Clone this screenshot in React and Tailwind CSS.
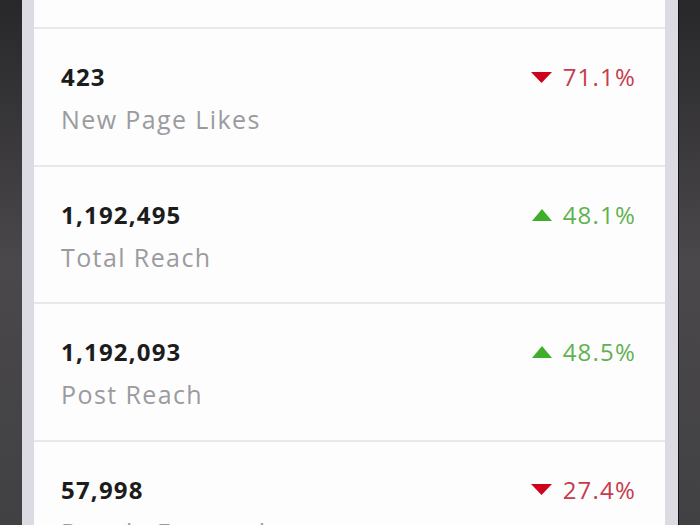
import React from 'react';

const stats = [
  { value: '423', label: 'New Page Likes', change: '71.1%', up: false },
  { value: '1,192,495', label: 'Total Reach', change: '48.1%', up: true },
  { value: '1,192,093', label: 'Post Reach', change: '48.5%', up: true },
  { value: '57,998', label: 'People Engaged', change: '27.4%', up: false },
];

function Trend({ up }) {
  if (up) {
    return (
      <svg width="20" height="12" viewBox="0 0 20 12" className="mr-[11px]">
        <polygon points="10,0 20,12 0,12" fill="#3fae2a" />
      </svg>
    );
  }
  return (
    <svg width="21" height="11" viewBox="0 0 21 11" className="mr-[11px]">
      <polygon points="0,0 21,0 10.5,11" fill="#d0021b" />
    </svg>
  );
}

function StatRow({ stat }) {
  return (
    <div className="h-[137.5px] border-b-2 border-[#e8e8ec] pl-[27px] pr-[29px] pt-[32px] flex justify-between items-start">
      <div>
        <div className="text-[24px] leading-[32px] font-bold text-[#1c1c1c] tracking-[1.2px]">{stat.value}</div>
        <div className="mt-[10px] text-[25px] leading-[32px] text-[#9b9b9e] tracking-[1.4px]">{stat.label}</div>
      </div>
      <div className="flex items-center h-[32px]">
        <Trend up={stat.up} />
        <span className={`text-[24px] leading-[32px] tracking-[1.2px] ${stat.up ? 'text-[#5fb250]' : 'text-[#c63c4c]'}`}>
          {stat.change}
        </span>
      </div>
    </div>
  );
}

export default function App() {
  return (
    <div className="w-[700px] h-[525px] overflow-hidden flex bg-gradient-to-b from-[#28272a] via-[#4a484b] to-[#414043] font-['Open_Sans',sans-serif]">
      <div className="w-[22px] shrink-0" />
      <div className="w-[12px] shrink-0 bg-[#dcdbe3]" />
      <div className="flex-1 bg-[#fdfdfe]">
        <div className="h-[29px] border-b-2 border-[#e8e8ec]" />
        {stats.map((s) => (
          <StatRow key={s.label} stat={s} />
        ))}
      </div>
      <div className="w-[14px] shrink-0 bg-[#dcdbe3] border-r border-[#141414]" />
      <div className="w-[21px] shrink-0" />
    </div>
  );
}
